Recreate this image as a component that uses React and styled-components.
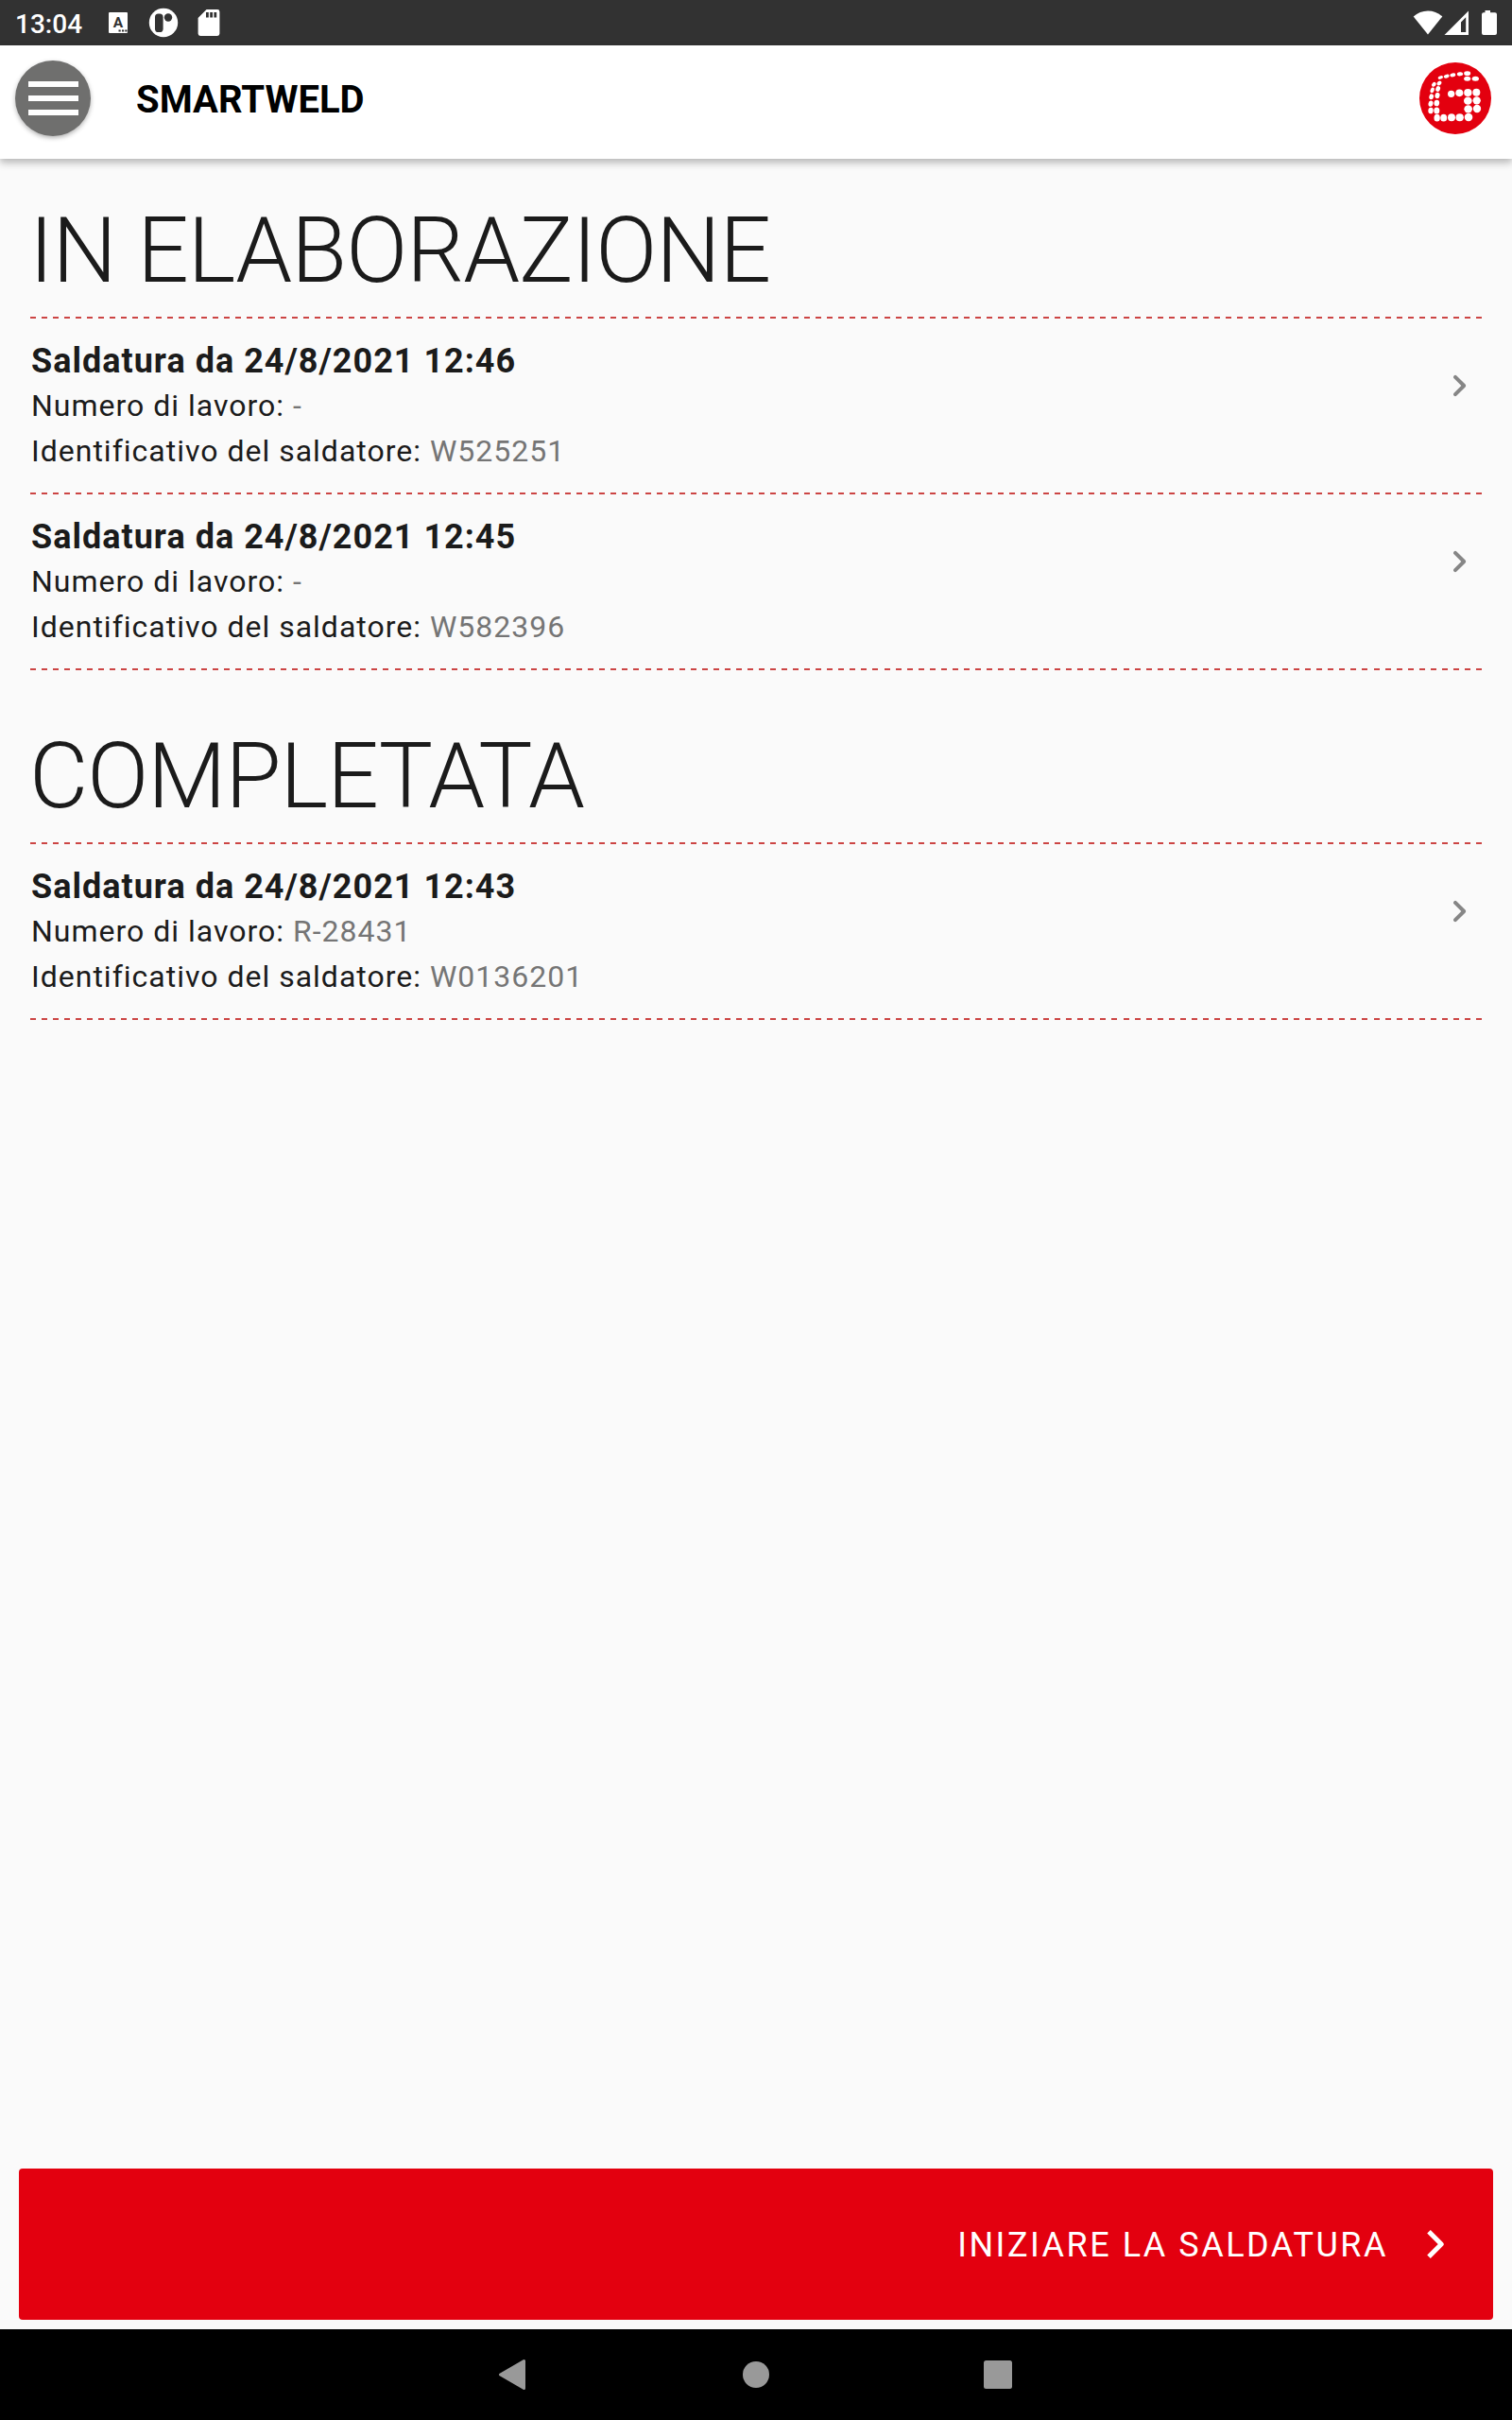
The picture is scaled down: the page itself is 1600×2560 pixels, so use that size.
import styled, { createGlobalStyle } from "styled-components";

const GlobalStyle = createGlobalStyle`
    * {
        box-sizing: border-box;
    }
    body {
        margin: 0;
        background: #fafafa;
        font-family: Roboto, "Liberation Sans", sans-serif;
    }
`;

const Screen = styled.div`
    width: 100%;
    height: 100vh;
    display: flex;
    flex-direction: column;
    background: #fafafa;
    color: #1b1b1b;
`;

const StatusBar = styled.div`
    height: 48px;
    flex-shrink: 0;
    display: flex;
    align-items: center;
    justify-content: space-between;
    padding: 0 16px;
    background: #323232;
    color: white;
`;

const StatusGroup = styled.div`
    display: flex;
    align-items: center;
    svg {
        display: block;
    }
`;

const Clock = styled.div`
    width: 92px;
    padding-top: 3px;
    font-size: 28px;
    line-height: 34px;
    font-weight: 500;
`;

const Header = styled.header`
    height: 120px;
    flex-shrink: 0;
    display: flex;
    align-items: center;
    padding: 0 22px 8px 16px;
    background: white;
    box-shadow: 0 4px 8px rgba(0, 0, 0, 0.28);
    z-index: 1;
`;

const MenuButton = styled.button`
    width: 80px;
    height: 80px;
    padding: 0;
    border: none;
    border-radius: 50%;
    display: flex;
    flex-direction: column;
    align-items: center;
    justify-content: center;
    gap: 8.5px;
    background: #6f6f6e;
    box-shadow: 0 2px 5px rgba(0, 0, 0, 0.3);
`;

const MenuLine = styled.span`
    width: 53px;
    height: 6.5px;
    background: white;
`;

const AppTitle = styled.h1`
    margin: 4px 0 0 48px;
    flex: 1;
    font-size: 40px;
    line-height: 48px;
    font-weight: 700;
    color: black;
`;

const Content = styled.main`
    flex: 1;
    padding: 48px 32px 0;
`;

const Section = styled.section`
    margin-bottom: 63px;
`;

const SectionTitle = styled.h2`
    margin: 0 0 0 -1px;
    height: 119px;
    font-size: 96px;
    line-height: 99px;
    font-weight: 300;
    letter-spacing: -1px;
`;

const Divider = styled.div`
    height: 2px;
    background: repeating-linear-gradient(
        to right,
        #cc4544 0 6px,
        transparent 6px 12.047px
    );
`;

const Row = styled.div`
    height: 184px;
    display: flex;
    align-items: flex-start;
    justify-content: space-between;
    padding: 20px 0 0 1px;
    svg {
        display: block;
        margin-top: 27px;
    }
`;

const RowTitle = styled.div`
    font-size: 36px;
    line-height: 50px;
    height: 48px;
    font-weight: 700;
    letter-spacing: 1px;
`;

const RowLine = styled.div`
    font-size: 32px;
    line-height: 48px;
    letter-spacing: 1px;
`;

const Value = styled.span`
    color: #757575;
`;

const StartButton = styled.button`
    height: 160px;
    flex-shrink: 0;
    margin: 0 20px 10px;
    padding: 0 52px 0 0;
    display: flex;
    align-items: center;
    justify-content: flex-end;
    gap: 41px;
    border: none;
    border-radius: 4px;
    background: #e3000f;
    color: white;
    font-family: inherit;
    font-size: 36px;
    letter-spacing: 2.5px;
`;

const StartLabel = styled.span`
    padding-top: 2px;
`;

const NavBar = styled.nav`
    height: 96px;
    flex-shrink: 0;
    display: flex;
    align-items: center;
    justify-content: center;
    gap: 208px;
    background: black;
    svg {
        display: block;
    }
`;

// x, y, rx, ry, rotation
const logoDots = [
    [253, 246, 8, 5, -20],
    [272, 242, 9, 5.5, -18],
    [292, 238, 9, 6, -12],
    [315, 235, 9.5, 6, -8],
    [338, 233, 10.5, 7, 0],
    [338, 250, 10.5, 7.5, 0],
    [364, 250, 11, 7.5, 0],
    [232, 268, 8, 6, -45],
    [249, 264, 8, 6, -45],
    [227, 286, 6, 9, 20],
    [245, 282, 7, 9, 20],
    [224, 307, 7, 9, 15],
    [243, 303, 7.5, 9.5, 15],
    [222, 329, 7.5, 9.5, 10],
    [241, 327, 8.5, 10, 5],
    [222, 351, 8, 10, 5],
    [241, 351, 9, 10.5, 0],
    [242, 374, 9.5, 11.5, 0],
    [263, 374, 10.5, 11.5, 0],
    [288, 373, 12, 12, 0],
    [314, 373, 12.5, 12, 0],
    [342, 372, 13, 12.5, 0],
    [287, 298, 11, 11, 0],
    [313, 295, 12, 11.5, 0],
    [340, 294, 12.5, 12, 0],
    [367, 293, 12, 12, 0],
    [340, 320, 13, 12.5, 0],
    [368, 319, 12.5, 12.5, 0],
    [341, 346, 13, 12.5, 0],
    [369, 345, 12.5, 12.5, 0],
];

const Logo = () => (
    <svg width="76" height="76" viewBox="186 198 228 228">
        <circle cx="300" cy="312" r="114" fill="#e3000f" />
        {logoDots.map(([x, y, rx, ry, angle]) => (
            <ellipse
                key={`${x}-${y}`}
                cx={x}
                cy={y}
                rx={rx}
                ry={ry}
                fill="white"
                transform={`rotate(${angle} ${x} ${y})`}
            />
        ))}
    </svg>
);

// status bar notifications: keyboard, app, sd card
const NotificationIcons = () => (
    <svg width="130" height="48" viewBox="108 0 130 48" fill="white">
        <rect x="115" y="13" width="20" height="22" rx="1" />
        <text x="125" y="29.2" fontSize="15.5" fontWeight="700" textAnchor="middle" fill="#323232">A</text>
        <path d="M125.5 31.4h2.2v2.2h-2.2zM129 31.4h2.2v2.2H129zM132.3 31.4h2.2v2.2h-2.2z" fill="#323232" />
        <circle cx="173" cy="24" r="15.2" />
        <rect x="164" y="14.5" width="8.6" height="19.5" rx="3.6" fill="#323232" />
        <circle cx="178" cy="18.5" r="4.2" fill="#323232" />
        <path d="M218.5 10H230a2.4 2.4 0 0 1 2.4 2.4V35.6a2.4 2.4 0 0 1-2.4 2.4H212a2.4 2.4 0 0 1-2.4-2.4V19z" />
        <path d="M218 13h2.8v5.6H218zM222.2 13h2.8v5.6h-2.8zM226.4 13h2.8v5.6h-2.8z" fill="#323232" />
    </svg>
);

const SystemIcons = () => (
    <svg width="90" height="48" viewBox="1494 0 90 48" fill="white">
        <path d="M1511 36.5L1495.7 17.5C1504 9.5 1518 9.5 1526.3 17.5z" />
        <path fillRule="evenodd" d="M1554 11.5V37H1528.5zM1551.2 18.2L1546 23.4V34H1551.2z" />
        <path d="M1571.5 11h5.5v2.3h5a2 2 0 0 1 2 2V35a2 2 0 0 1-2 2h-12a2 2 0 0 1-2-2V15.3a2 2 0 0 1 2-2h1.5z" />
    </svg>
);

const RowChevron = () => (
    <svg width="48" height="48" viewBox="0 0 24 24" fill="#868686">
        <path d="M9.29 6.71c-.39.39-.39 1.02 0 1.41L13.17 12l-3.88 3.88c-.39.39-.39 1.02 0 1.41.39.39 1.02.39 1.41 0l4.59-4.59c.39-.39.39-1.02 0-1.41L10.7 6.7c-.38-.38-1.02-.38-1.41.01z" />
    </svg>
);

const StartChevron = () => (
    <svg width="18" height="30" viewBox="0 0 18 30" fill="none" stroke="white" strokeWidth="5" strokeLinejoin="round">
        <path d="M2 1.8L15.2 15L2 28.2" />
    </svg>
);

const sections = [
    {
        title: "IN ELABORAZIONE",
        welds: [
            { date: "24/8/2021 12:46", job: "-", welder: "W525251" },
            { date: "24/8/2021 12:45", job: "-", welder: "W582396" },
        ],
    },
    {
        title: "COMPLETATA",
        welds: [{ date: "24/8/2021 12:43", job: "R-28431", welder: "W0136201" }],
    },
];

const WeldRow = ({ weld }) => {
    const { date, job, welder } = weld;

    return (
        <>
            <Row>
                <div>
                    <RowTitle>Saldatura da {date}</RowTitle>
                    <RowLine>
                        Numero di lavoro: <Value>{job}</Value>
                    </RowLine>
                    <RowLine>
                        Identificativo del saldatore: <Value>{welder}</Value>
                    </RowLine>
                </div>
                <RowChevron />
            </Row>
            <Divider />
        </>
    );
};

const App = () => {
    return (
        <Screen>
            <GlobalStyle />
            <StatusBar>
                <StatusGroup>
                    <Clock>13:04</Clock>
                    <NotificationIcons />
                </StatusGroup>
                <StatusGroup>
                    <SystemIcons />
                </StatusGroup>
            </StatusBar>
            <Header>
                <MenuButton aria-label="Menu">
                    <MenuLine />
                    <MenuLine />
                    <MenuLine />
                </MenuButton>
                <AppTitle>SMARTWELD</AppTitle>
                <Logo />
            </Header>
            <Content>
                {sections.map(({ title, welds }) => (
                    <Section key={title}>
                        <SectionTitle>{title}</SectionTitle>
                        <Divider />
                        {welds.map((weld) => (
                            <WeldRow key={weld.date} weld={weld} />
                        ))}
                    </Section>
                ))}
            </Content>
            <StartButton>
                <StartLabel>INIZIARE LA SALDATURA</StartLabel>
                <StartChevron />
            </StartButton>
            <NavBar>
                <svg width="48" height="48" viewBox="0 0 48 48">
                    <path d="M9.500 24L34.500 9.500V38.500z" fill="#999" stroke="#999" strokeWidth="3" strokeLinejoin="round" />
                </svg>
                <svg width="48" height="48" viewBox="0 0 48 48">
                    <circle cx="24" cy="24" r="14" fill="#999" />
                </svg>
                <svg width="48" height="48" viewBox="0 0 48 48">
                    <rect x="9" y="9" width="30" height="30" rx="2.5" fill="#999" />
                </svg>
            </NavBar>
        </Screen>
    );
};

export default App;
